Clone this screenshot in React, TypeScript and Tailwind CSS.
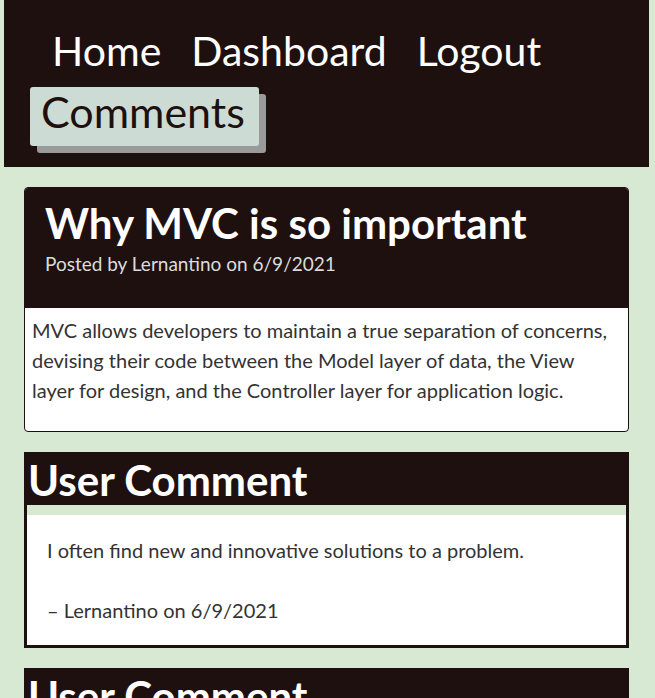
const comments = [
  { text: "I often find new and innovative solutions to a problem.", author: "Lernantino", date: "6/9/2021" },
  { text: "I often find new and innovative solutions to a problem.", author: "Lernantino", date: "6/9/2021" },
];

function CommentCard({ text, author, date }: { text: string; author: string; date: string }) {
  return (
    <div className="border-[3px] border-[#1f1010] bg-[#1f1010]">
      <h2 className="pt-[2px] pl-px text-[42px] leading-[46px] font-bold text-white">User Comment</h2>
      <div className="mt-[2px] border-t-[10px] border-[#d8e9d3] bg-white px-[20px] py-[20px] text-[20px] leading-[30px] text-[#333]">
        <p>{text}</p>
        <p className="mt-[30px]">
          – {author} on {date}
        </p>
      </div>
    </div>
  );
}

export default function App() {
  return (
    <div className="min-h-screen bg-[#d8e9d3] font-['Lato',sans-serif]">
      <header className="ml-[4px] mr-[6px] h-[167px] bg-[#1f1010] pt-[27px]">
        <nav className="flex gap-[30px] pl-[48px] text-[41px] leading-[48px] text-white">
          <a href="#">Home</a>
          <a href="#">Dashboard</a>
          <a href="#">Logout</a>
        </nav>
        <div className="mt-[12px] pl-[26px]">
          <button className="h-[59px] w-[229px] rounded-[3px] bg-[#ccdcd4] pb-[10px] pl-[11px] text-left text-[43px] leading-[48px] text-[#1f1010] shadow-[7px_7px_0_#9a9a9a]">
            Comments
          </button>
        </div>
      </header>

      <main className="ml-[4px] mr-[6px] flex flex-col gap-[20px] p-[20px]">
        <article className="overflow-hidden rounded-[4px] border border-[#1f1010] bg-white">
          <div className="h-[120px] bg-[#1f1010] px-[20px] pt-[12px]">
            <h1 className="text-[42px] leading-[47px] font-bold text-white">Why MVC is so important</h1>
            <p className="mt-[5px] text-[19px] leading-[24px] text-[#dcdcdc]">Posted by Lernantino on 6/9/2021</p>
          </div>
          <div className="px-[7px] pt-[7px] pb-[26px] text-[20px] leading-[30px] text-[#333]">
            MVC allows developers to maintain a true separation of concerns, devising their code between the Model
            layer of data, the View layer for design, and the Controller layer for application logic.
          </div>
        </article>

        {comments.map((c, i) => (
          <CommentCard key={i} {...c} />
        ))}
      </main>
    </div>
  );
}
